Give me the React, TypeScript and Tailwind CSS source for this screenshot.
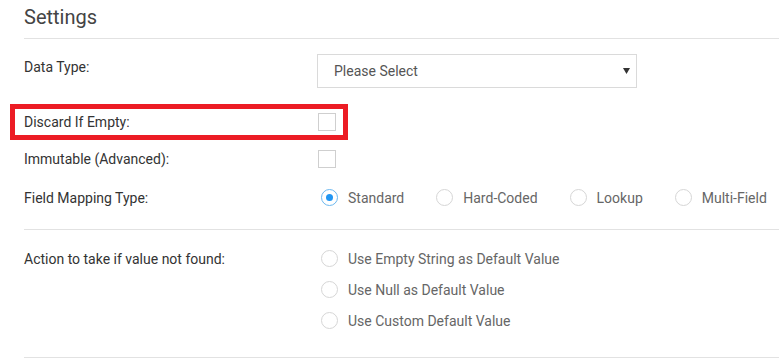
import type { ReactNode } from "react";

const MAPPING_TYPES = ["Standard", "Hard-Coded", "Lookup", "Multi-Field"];
const FALLBACKS = [
  "Use Empty String as Default Value",
  "Use Null as Default Value",
  "Use Custom Default Value",
];

function Radio({ label, checked = false }: { label: string; checked?: boolean }) {
  return (
    <label className="flex h-[17px] items-center gap-[10px]">
      <span
        className={`flex h-[17px] w-[17px] shrink-0 items-center justify-center rounded-full border ${
          checked ? "border-[#6cb8ef]" : "border-[#d6d6d6]"
        }`}
      >
        {checked && <span className="h-[7px] w-[7px] rounded-full bg-[#2196f3]" />}
      </span>
      <span className="text-[14px] leading-4 whitespace-nowrap text-[#666]">{label}</span>
    </label>
  );
}

function Checkbox() {
  return <span className="ml-px block h-[18px] w-[18px] border border-[#cfcfcf] bg-white" />;
}

function Row({ label, className, children }: { label: string; className: string; children: ReactNode }) {
  return (
    <div className={`flex ${className}`}>
      <span className="w-[293px] shrink-0 text-[14px] leading-4 text-[#333]">{label}</span>
      {children}
    </div>
  );
}

export default function App() {
  return (
    <div className="h-[360px] w-[779px] overflow-hidden bg-white pl-6 font-['Roboto',sans-serif]">
      <h2 className="h-[39px] border-b border-[#e2e2e2] pt-[5px] text-[20px] leading-6 font-normal text-[#444]">
        Settings
      </h2>

      {/* Data type select */}
      <Row label="Data Type:" className="mt-[15px] h-[34px] items-start [&>span:first-child]:pt-[5px]">
        <div className="flex h-[34px] w-[320px] items-center justify-between border border-[#dadada] pr-[6px] pl-4">
          <span className="text-[14px] text-[#555]">Please Select</span>
          <svg width="7" height="6" viewBox="0 0 7 6">
            <path d="M0 0h7L3.5 6z" fill="#333" />
          </svg>
        </div>
      </Row>

      {/* Discard if empty, highlighted */}
      <div className="relative">
        <div className="pointer-events-none absolute -top-[9px] -left-[14px] h-[36px] w-[338px] border-[5px] border-[#ec1c24]" />
        <Row label="Discard If Empty:" className="mt-[25px] h-[18px] items-center">
          <Checkbox />
        </Row>
      </div>

      <Row label="Immutable (Advanced):" className="mt-[19px] h-[18px] items-center">
        <Checkbox />
      </Row>

      <Row label="Field Mapping Type:" className="mt-[21px] h-[17px] items-center">
        <div className="ml-[4px] flex gap-[32px]">
          {MAPPING_TYPES.map((t, i) => (
            <Radio key={t} label={t} checked={i === 0} />
          ))}
        </div>
      </Row>

      <div className="mt-[23px] h-px bg-[#e2e2e2]" />

      <Row label="Action to take if value not found:" className="mt-[20px] items-start [&>span:first-child]:pt-[1px]">
        <div className="ml-[4px] flex flex-col gap-[14px]">
          {FALLBACKS.map((f) => (
            <Radio key={f} label={f} />
          ))}
        </div>
      </Row>

      <div className="mt-[28px] h-px bg-[#e2e2e2]" />
    </div>
  );
}
